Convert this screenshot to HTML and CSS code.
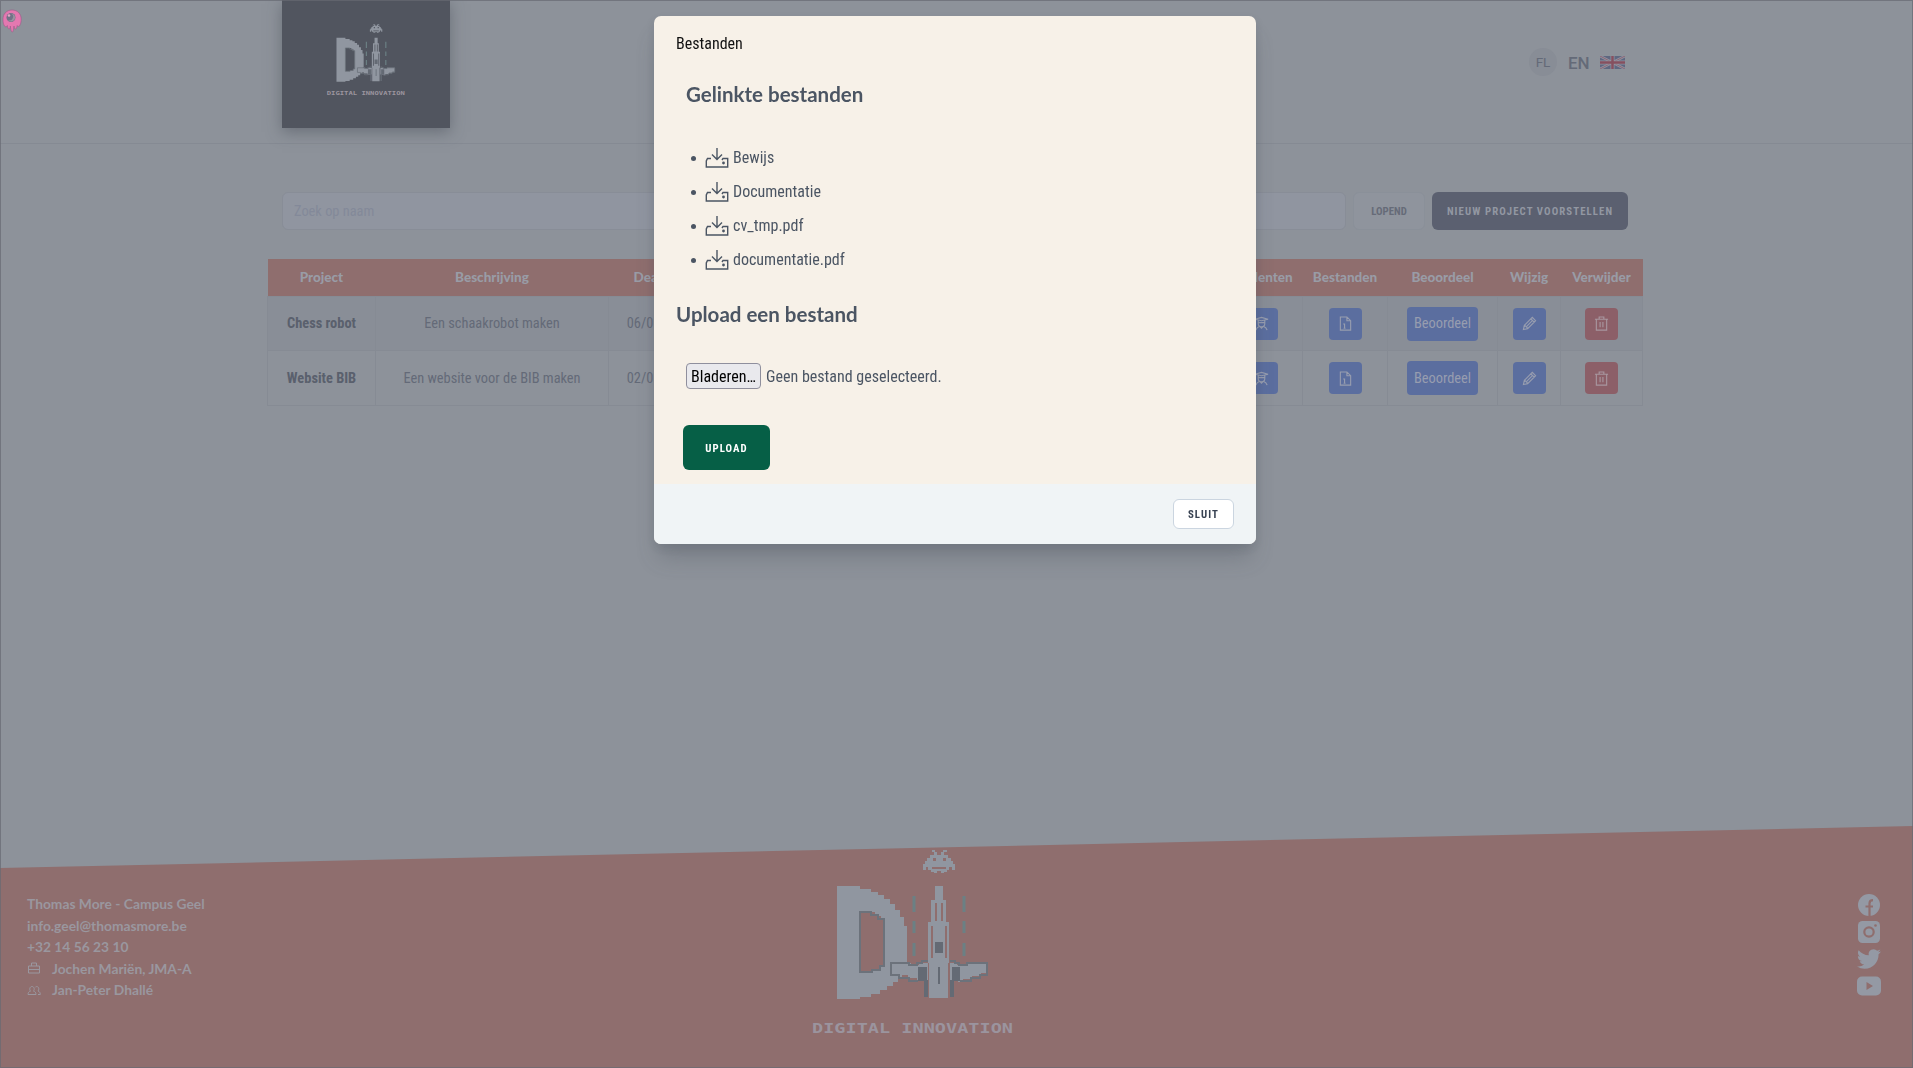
FILE: index.html
```html
<!DOCTYPE html>
<html lang="nl">
<head>
<meta charset="utf-8">
<title>Digital Innovation - Projecten</title>
<link rel="stylesheet" href="styles.css">
</head>
<body>
<svg class="defs" aria-hidden="true">
  <symbol id="logo" viewBox="810 848 206 190">
    <path class="px" fill-rule="evenodd" d="M837 886h23v3h11v3h7v3h6v4h6v5h5v6h5v7h4v9h3v36h-2v9h-3v6h-4v5h-5v4h-6v4h-7v4h-9v3h-11v2h-23zM860 912v60h12v-2h8v-4h4v-47h-3v-3h-6v-4z"/>
    <path class="edge" d="M860 972v-60h11v3h7v4h6v47h-4v4h-8v2z"/>
    <path class="px" fill-rule="evenodd" d="M932 850h3v2h2v3h4v-3h2v-2h4v2h-3v3h4v3h3v3h2v3h2v6h-3v-3h-3v3h-2v2h-3v1h-3v-2h-4v2h-3v-1h-3v-2h-3v-3h-2v3h-3v-6h2v-3h2v-3h3v-3h4v-3h-2zM933 858v3h3v-3zM943 858v3h3v-3zM932 867v2h14v-2z"/>
    <path class="px" fill-rule="evenodd" d="M935 886h8v14h3v22h3v41h-1v35h-19v-35h-1v-41h3v-22h4zM935 903v18h2v-18zM941 903v18h2v-18zM931 926v32h2v-32zM945 926v32h2v-32z"/>
    <path class="px" d="M891 963h20v2h8v-2h9v18h-11v-3h-9v-3h-9v-2h-8zM987 963h-20v2h-10v-2h-7v18h8v1h5v-3h9v-3h9v-3h6z"/>
    <path class="edge" d="M928 961h-6v2h-5v2h-8v-2h-18v12h8v3h10v3h9M950 961h5v2h4v2h8v-2h20v12h-7v3h-9v3h-11"/>
    <path class="dark" d="M918 967h9v14h-9zM952 967h8v14h-8zM924 980h4v17h-4zM950 980h4v17h-4zM935 942h8v11h-8zM938 967h2v17h-2z"/>
    <path class="laser" d="M914 896v16M914 921v12M914 943v13M964 896v16M964 921v12M964 943v13"/>
    <text x="812" y="1033" textLength="201" lengthAdjust="spacingAndGlyphs">DIGITAL INNOVATION</text>
  </symbol>
  <symbol id="student" viewBox="0 0 16 16"><path d="M1 3.500 8 1.500l7 2L8 5zM4.500 4.500v3.500a3.500 3.500 0 0 0 7 0V4.500M4.500 7h7M2 15c.5-2 1.500-3 4-4l2 2 2-2c2.500 1 3.500 2 4 4"/></symbol>
  <symbol id="file" viewBox="0 0 16 16"><path d="M2.500 1h7l4 4v10h-11zM9.500 1v4h4M7 8v5M5.500 8.500h1.500M6 13h2"/></symbol>
  <symbol id="pencil" viewBox="0 0 16 16"><path d="M1.500 14.500 2.500 10 11 1.500l3.500 3.500L6 13.500zM3 10l3 3M9.500 3l3.500 3.500M5 11l6-6"/></symbol>
  <symbol id="trash" viewBox="0 0 16 16"><path d="M1 3.500h14M5.500 3V1h5v2M2.500 4v11h11V4M6.500 6.500v5.500M9.500 6.500v5.500"/></symbol>
  <symbol id="download" viewBox="0 0 24 20"><path d="M12 0v11M7 6.500 12 11.500l5-5M6 10.500H2.500L1.300 13v6h21.400V10.500H18l-1 1.500"/><circle cx="18.500" cy="15" r=".7"/></symbol>
</svg>

<header class="site-header">
  <div class="brand"><svg class="brand-logo"><use href="#logo"/></svg></div>
  <div class="user">
    <span class="avatar">FL</span>
    <span class="lang">EN</span>
    <svg class="flag" viewBox="0 0 50 26"><path fill="#5f6780" d="M0 0h50v26H0z"/><path stroke="#9093a0" stroke-width="5" d="m0 0 50 26M50 0 0 26"/><path stroke="#8d6675" stroke-width="2" d="m0 0 50 26M50 0 0 26"/><path stroke="#9093a0" stroke-width="8" d="M25 0v26M0 13h50"/><path stroke="#86505f" stroke-width="5" d="M25 0v26M0 13h50"/></svg>
  </div>
</header>

<main class="content">
  <div class="filters">
    <div class="search">Zoek op naam</div>
    <div class="btn btn-light">LOPEND</div>
    <div class="btn btn-dark">NIEUW PROJECT VOORSTELLEN</div>
  </div>
  <table class="projects">
    <colgroup><col class="c1"><col class="c2"><col class="c3"><col class="c4"><col class="c5"><col class="c6"><col class="c7"><col class="c8"><col class="c9"></colgroup>
    <tr><th>Project</th><th>Beschrijving</th><th>Deadline</th><th></th><th>Studenten</th><th>Bestanden</th><th>Beoordeel</th><th>Wijzig</th><th>Verwijder</th></tr>
    <tr class="odd"><td class="name">Chess robot</td><td>Een schaakrobot maken</td><td>06/01/2023</td><td></td>
      <td><span class="ib"><svg><use href="#student"/></svg></span></td><td><span class="ib"><svg><use href="#file"/></svg></span></td><td><span class="ib wide">Beoordeel</span></td><td><span class="ib"><svg><use href="#pencil"/></svg></span></td><td><span class="ib red"><svg><use href="#trash"/></svg></span></td></tr>
    <tr><td class="name">Website BIB</td><td>Een website voor de BIB maken</td><td>02/01/2023</td><td></td>
      <td><span class="ib"><svg><use href="#student"/></svg></span></td><td><span class="ib"><svg><use href="#file"/></svg></span></td><td><span class="ib wide">Beoordeel</span></td><td><span class="ib"><svg><use href="#pencil"/></svg></span></td><td><span class="ib red"><svg><use href="#trash"/></svg></span></td></tr>
  </table>
</main>

<footer class="site-footer">
  <div class="contact">
    <div>Thomas More - Campus Geel</div>
    <div>info.geel@thomasmore.be</div>
    <div>+32 14 56 23 10</div>
    <div><svg viewBox="0 0 14 14"><path d="M1.500 5h11v7h-11zM4.500 5V2h5v3M1.500 8.500h11"/></svg>Jochen Mariën, JMA-A</div>
    <div><svg viewBox="0 0 14 14"><path d="M1 11.500c0-2 1-3 2.500-3.300C2 6 3 3.500 5 3.500s3 2.500 1.500 4.700C8 8.500 9 9.500 9 11.500zM8.500 4c2.500-1.500 4.500 1.500 2.500 4 1.500.5 2.300 1.500 2.300 3.500H11"/></svg>Jan-Peter Dhallé</div>
  </div>
  <svg class="footer-logo"><use href="#logo"/></svg>
  <div class="social">
    <svg viewBox="0 0 24 24"><circle cx="12" cy="12" r="11"/><path class="cut" d="M12.500 23V10.500c0-2.300 1-3.300 3.500-3.300M8.500 13.500H16"/></svg>
    <svg viewBox="0 0 24 24"><rect x="1" y="1" width="22" height="22" rx="4.500"/><circle class="cut" cx="12" cy="12" r="4.700"/><circle class="dot" cx="18.500" cy="5.500" r="1.300"/></svg>
    <svg viewBox="0 0 24 24"><path d="M23.950 4.570a10 10 0 0 1-2.820.770 4.960 4.960 0 0 0 2.160-2.720c-.95.550-2 .950-3.130 1.180a4.920 4.920 0 0 0-8.380 4.480C7.690 8.100 4.070 6.130 1.640 3.160a4.820 4.820 0 0 0-.67 2.480c0 1.710.87 3.210 2.190 4.100a4.900 4.900 0 0 1-2.230-.62v.06a4.920 4.920 0 0 0 3.950 4.830 5 5 0 0 1-2.210.080 4.940 4.940 0 0 0 4.600 3.420A9.870 9.870 0 0 1 0 19.540a13.990 13.990 0 0 0 7.560 2.210c9.050 0 14-7.500 14-13.980l-.020-.640a9.940 9.940 0 0 0 2.410-2.560z"/></svg>
    <svg viewBox="0 0 24 24"><rect y="2.500" width="24" height="19" rx="5"/><path class="dot" d="m9.500 8 6.500 4-6.500 4z"/></svg>
  </div>
</footer>

<div class="frame"></div>
<svg class="debug" viewBox="0 0 20 24"><path fill="#e478b0" stroke="#a0578a" stroke-width=".6" d="M10 1C4.500 1 1 5 1 10c0 3 .2 5.500 2 7.500 1.200 1 2-.5 2.300-1 .3 1.500.7 3.500 1.700 3.500s1.200-1.500 1.300-3c.4 2 .7 6 1.900 6s1.500-4 1.800-6c.2 1.500.4 3 1.500 3s1.400-2 1.700-3.500c.8 1.200 2 1.500 2.800-.5.8-1.800 1.200-3.500 1.200-6C19.200 5 15.500 1 10 1z"/><circle cx="9" cy="8.500" r="4.500" fill="#717287"/><path d="M9 4.500a4 4 0 1 1-3 6.500 3.500 3.500 0 0 0 3-6.500z" fill="#9a929f"/><circle cx="7" cy="6.500" r="1.300" fill="#e7a5c8"/></svg>

<section class="modal">
  <div class="modal-body">
    <div class="modal-title">Bestanden</div>
    <div class="linked">
      <h2>Gelinkte bestanden</h2>
      <ul>
        <li><svg><use href="#download"/></svg>Bewijs</li>
        <li><svg><use href="#download"/></svg>Documentatie</li>
        <li><svg><use href="#download"/></svg>cv_tmp.pdf</li>
        <li><svg><use href="#download"/></svg>documentatie.pdf</li>
      </ul>
    </div>
    <h2>Upload een bestand</h2>
    <div class="picker"><span class="browse">Bladeren…</span><span>Geen bestand geselecteerd.</span></div>
    <div class="upload">UPLOAD</div>
  </div>
  <div class="modal-footer"><div class="close">SLUIT</div></div>
</section>
</body>
</html>
```
FILE: styles.css
```css
* { box-sizing: border-box; }
body {
  margin: 0;
  height: 1068px;
  overflow: hidden;
  display: flex;
  flex-direction: column;
  background: #8d929a;
  color: #646a78;
  font-family: "Roboto Condensed", Roboto, sans-serif;
  font-stretch: 75%;
  font-size: 14.400px;
}
svg { display: block; fill: none; }
.defs { position: absolute; width: 0; height: 0; }

/* pixel-art logo */
#logo, .brand-logo, .footer-logo { overflow: visible; }
.px { fill: #9096a0; }
.edge { fill: none; stroke: #6c727b; stroke-width: 2; }
.dark { fill: #646a74; }
.laser { stroke: #6b8084; stroke-width: 3; }
#logo text { fill: #9b949e; font: bold 14px "DejaVu Sans Mono", monospace; }

.site-header {
  height: 144px;
  flex: none;
  display: flex;
  justify-content: space-between;
  padding: 0 288px 0 282px;
  border-bottom: 1px solid #858a93;
}
.brand {
  width: 168px;
  height: 128px;
  padding: 23px 0 0 44px;
  background: #51555f;
  box-shadow: 0 4px 14px rgba(70, 75, 85, .5);
}
.brand-logo { width: 80px; height: 74px; }
.user { display: flex; align-items: center; height: 124px; }
.avatar {
  width: 28px;
  height: 28px;
  border-radius: 50%;
  background: #888d96;
  font: 13.500px/28px Roboto, sans-serif;
  text-align: center;
  margin-right: 11px;
}
.lang { font: 500 17px/20px Roboto, sans-serif; width: 32px; padding-top: 1px; }
.flag { width: 25px; height: 13px; }

.content { flex: 1; padding: 48px 270px 0 267px; }
.filters { display: flex; height: 38px; padding: 0 15px 0 15px; }
.search {
  width: 1064px;
  border: 1px solid #888d97;
  border-radius: 6px;
  background: #9095a0;
  color: #838999;
  padding: 0 11px;
  line-height: 38px;
  margin-right: 7px;
}
.btn {
  border-radius: 6px;
  text-align: center;
  font-size: 10.800px;
  font-weight: 700;
  line-height: 39px;
  white-space: nowrap;
}
.btn-light { width: 72px; margin-right: 7px; border: 1px solid #8a9099; line-height: 37px; background: #8f949d; color: #666b78; }
.btn-dark { width: 196px; background: #5b6070; color: #9297a2; letter-spacing: 1.080px; }

.projects { margin-top: 29px; width: 1375px; border-collapse: collapse; table-layout: fixed; }
.c1 { width: 108px; } .c2 { width: 233px; } .c3 { width: 104px; } .c4 { width: 508px; }
.c5 { width: 82px; } .c6 { width: 85px; } .c7 { width: 110px; } .c8 { width: 63px; } .c9 { width: 82px; }
.projects th {
  height: 37px;
  padding: 0;
  background: #8f6e6e;
  color: #999ca6;
  font: 900 13.500px Lato, sans-serif;
}
.projects td { height: 54.500px; padding: 1px 0 0; border: 1px solid #868b94; text-align: center; }
.odd td { background: #898e97; }
.projects .name { font-weight: 700; color: #5a606d; }
.ib {
  display: flex;
  align-items: center;
  justify-content: center;
  width: 33px;
  height: 32px;
  margin: 0 auto;
  border-radius: 4px;
  background: #5b6e9f;
  color: #979daf;
}
.ib svg { width: 15px; height: 15px; stroke: #979daf; stroke-width: 1.200; }
.wide { width: 71px; height: 34px; }
.red { background: #8c5f68; }
.red svg { stroke: #a8969f; }

.site-footer {
  height: 242px;
  flex: none;
  display: grid;
  grid-template-columns: 783px 1fr 60px;
  padding-left: 27px;
  background: #8f6e6e;
  clip-path: polygon(0 42px, 100% 0, 100% 100%, 0 100%);
  color: #9a979f;
}
.contact { padding-top: 67px; font: 700 13.800px/21.500px Lato, sans-serif; }
.contact div { display: flex; align-items: center; }
.contact svg { width: 14px; height: 14px; margin-right: 11px; stroke: #9a979f; }
.footer-logo { width: 206px; height: 190px; margin-top: 22px; }
.social { padding: 67px 0 0 4px; display: flex; flex-direction: column; gap: 3px; }
.social svg { width: 24px; height: 24px; fill: #9499a4; }
.social .cut { fill: none; stroke: #8f6e6e; stroke-width: 2.200; }
.social .dot { fill: #8f6e6e; }

.frame { position: fixed; inset: 0; border: 1px solid #666a72; opacity: .7; }
.debug { position: fixed; left: 2px; top: 9px; width: 20px; height: 24px; }

.modal {
  position: fixed;
  left: 654px;
  top: 16px;
  width: 602px;
  height: 528px;
  border-radius: 7px;
  overflow: hidden;
  background: #f7f1e8;
  box-shadow: 0 18px 22px -5px rgba(70, 75, 85, .3), 0 5px 10px rgba(70, 75, 85, .15);
  color: #4b5563;
  font-size: 16px;
}
.modal-body { height: 468px; padding: 16px 22px; }
.modal-title { line-height: 24px; color: #111; }
.linked { padding: 22px 10px 0; height: 242px; }
h2 { margin: 0; font: 700 20.500px/32px Lato, sans-serif; }
ul { margin: 31px 0 0; padding: 0 0 0 19px; list-style: none; }
li { position: relative; height: 34px; line-height: 34px; }
li::before {
  content: "";
  position: absolute;
  left: -14px;
  top: 15px;
  width: 5px;
  height: 5px;
  border-radius: 50%;
  background: #4b5563;
}
li svg { float: left; width: 24px; height: 20px; margin: 7px 4px 0 0; stroke: #4b5563; stroke-width: 1.400; }
.picker { display: flex; align-items: center; gap: 5px; margin: 33px 0 0 10px; height: 26px; }
.browse { width: 75px; height: 26px; border: 1px solid #8f8f9d; border-radius: 4px; background: #e9e9ed; color: #000; line-height: 25px; text-align: center; }
.upload, .close {
  font-size: 10.800px;
  font-weight: 700;
  letter-spacing: 1.080px;
  text-align: center;
}
.upload {
  width: 87px;
  height: 45px;
  margin: 36px 0 0 7px;
  border-radius: 6px;
  background: #065f46;
  color: #fff;
  line-height: 47px;
}
.modal-footer { height: 60px; padding: 15px 22px; background: #f0f4f6; display: flex; justify-content: flex-end; }
.close {
  width: 61px;
  height: 30px;
  border: 1px solid #cbd5e0;
  border-radius: 6px;
  background: #fff;
  color: #374151;
  line-height: 30px;
}
```
